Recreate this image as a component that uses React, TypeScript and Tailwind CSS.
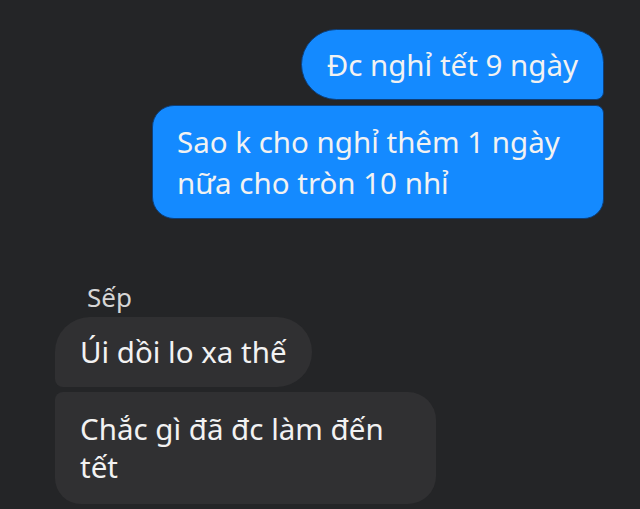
import React from "react";

export default function App() {
  const font = { fontFamily: '"Noto Sans", "Open Sans", sans-serif' };
  return (
    <div
      className="w-[640px] h-[509px] overflow-hidden bg-[#242527] flex flex-col text-[#f2f2f2]"
      style={font}
    >
      <div className="flex flex-col items-end pt-[29px] pr-[36px] gap-[5px]">
        <div className="bg-[#148aff] border border-[#0d3f7a] rounded-l-[36px] rounded-tr-[34px] rounded-br-[8px] px-[25px] py-[14px] text-[29.5px] leading-[41px]">
          Đc nghỉ tết 9 ngày
        </div>
        <div className="bg-[#148aff] border border-[#0d3f7a] rounded-l-[22px] rounded-tr-[8px] rounded-br-[20px] px-[24px] py-[15px] text-[29.5px] leading-[41px] w-[452px]">
          Sao k cho nghỉ thêm 1 ngày nữa cho tròn 10 nhỉ
        </div>
      </div>
      <div className="flex flex-col items-start pl-[55px] mt-[64px]">
        <div className="pl-[32px] text-[26px] leading-[28px] text-[#d6d6d6] mb-[6px]">Sếp</div>
        <div className="bg-[#303032] rounded-tl-[35px] rounded-bl-[8px] rounded-r-[35px] px-[25px] py-[15px] text-[29.5px] leading-[40px]">
          Úi dồi lo xa thế
        </div>
        <div className="mt-[5px] bg-[#303032] rounded-tl-[8px] rounded-bl-[26px] rounded-r-[28px] px-[25px] py-[18px] text-[29.5px] leading-[38px] w-[381px]">
          Chắc gì đã đc làm đến tết
        </div>
      </div>
    </div>
  );
}
